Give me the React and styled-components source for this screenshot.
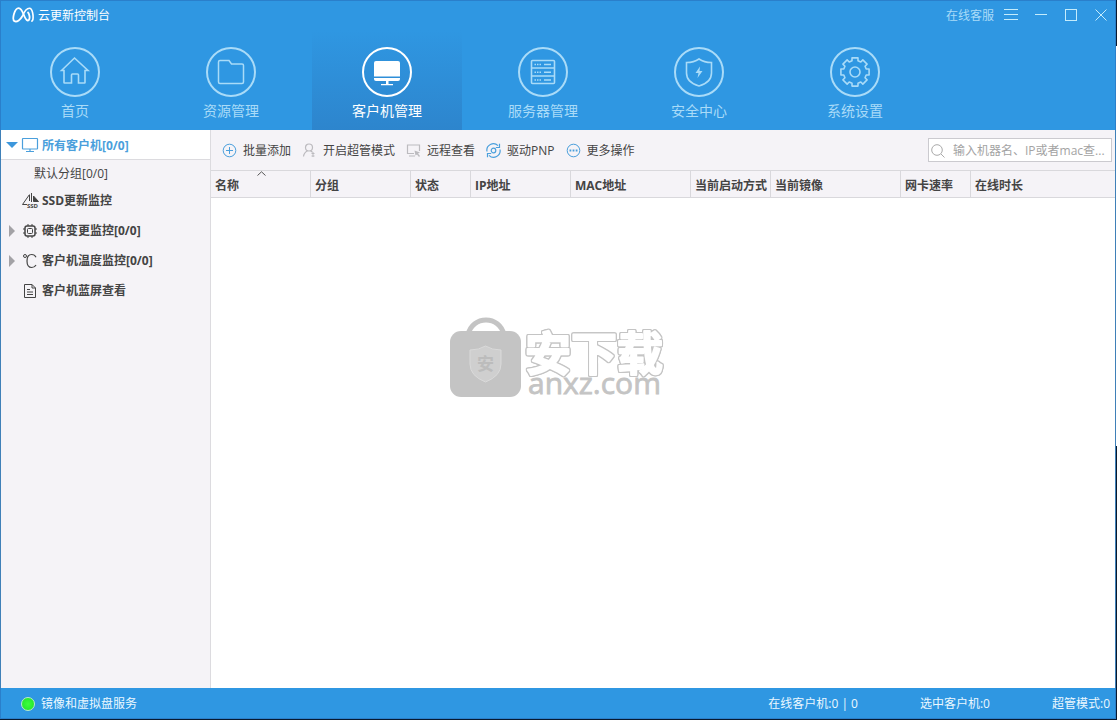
import { useState } from "react";
import styled, { createGlobalStyle, css } from "styled-components";

const GlobalStyle = createGlobalStyle`
  * {
    box-sizing: border-box;
  }

  body {
    margin: 0;
    font-family: "Open Sans", "Noto Sans CJK SC", sans-serif;
    font-size: 12px;
    line-height: 17px;
    color: #444;
  }

  button,
  input {
    margin: 0;
    padding: 0;
    border: none;
    background: none;
    font: inherit;
    color: inherit;
  }
`;

const Desktop = styled.div`
  height: 100vh;
  padding: 0 1px 1px 0;
  background: linear-gradient(#081a30 46px, #fff 46px, #fff 446px, #081a30 446px);
`;

const Window = styled.div`
  position: relative;
  display: flex;
  flex-direction: column;
  height: 100%;
  background: #fff;
`;

const Header = styled.header`
  background: #2f97e2;
  box-shadow: inset 1px 1px 0 #2a7fcb, inset -1px 0 0 #2a7fcb;
`;

const TitleBar = styled.div`
  display: flex;
  align-items: center;
  height: 30px;
  padding: 0 8px 0 12px;
  color: #fff;
`;

const Title = styled.h1`
  flex: 1;
  margin: 0 0 0 4px;
  font-size: 12px;
  font-weight: 400;
`;

const WindowControls = styled.div`
  display: flex;
  align-items: center;
  gap: 16px;
  color: #c4ecfc;
`;

const ServiceLink = styled.a`
  margin-right: -6px;
  color: #a9dbf8;
  text-decoration: none;
`;

const ControlButton = styled.button`
  display: flex;
  width: 14px;
  height: 14px;
`;

const Nav = styled.nav`
  display: flex;
  gap: 6px;
`;

const NavButton = styled.button`
  display: flex;
  flex-direction: column;
  align-items: center;
  gap: 4px;
  width: 150px;
  height: 100px;
  padding-top: 17px;
  font-size: 14px;
  line-height: 20px;
  color: #a9dbf8;

  ${(props) =>
    props.$active &&
    css`
      color: #fff;
      background: linear-gradient(#2f97e2, #2d85cd);
    `}
`;

const Body = styled.div`
  display: flex;
  flex: 1;
  min-height: 0;
  border-left: 1px solid #3f80b8;
  border-right: 1px solid #3f80b8;
`;

const Sidebar = styled.aside`
  flex: none;
  width: 210px;
  border-right: 1px solid #dcdbdf;
  background: #f5f3f7;
`;

const TreeList = styled.ul`
  margin: 0;
  padding: 0;
  list-style: none;
`;

const TreeItem = styled.button`
  display: flex;
  align-items: center;
  width: 100%;
  height: 30px;
  padding: 1px 0 0 5px;
  font-weight: 700;
  text-align: left;

  svg {
    margin-right: 4px;
    overflow: visible;
  }

  ${(props) =>
    props.$active &&
    css`
      border-bottom: 1px solid #dcdbdf;
      background: #fff;
      color: #4a9fdc;
    `}

  ${(props) =>
    props.$child &&
    css`
      height: 25px;
      padding: 2px 0 0 33px;
      font-weight: 400;
    `}
`;

const Arrow = styled.span`
  display: flex;
  justify-content: center;
  width: 12px;
  margin-right: 4px;

  &::before {
    content: "";
    border-style: solid;
    ${(props) =>
      props.$state === "open" &&
      css`
        border-width: 6px 6px 0;
        border-color: #3d97dc transparent transparent;
      `}
    ${(props) =>
      props.$state === "closed" &&
      css`
        border-width: 6px 0 6px 6px;
        border-color: transparent transparent transparent #a3a2a6;
      `}
    ${(props) =>
      !props.$state &&
      css`
        border-width: 0;
      `}
  }
`;

const Main = styled.main`
  flex: 1;
  min-width: 0;
`;

const Toolbar = styled.div`
  display: flex;
  align-items: center;
  gap: 11px;
  height: 40px;
  padding: 0 3px 0 11px;
  background: #f5f3f7;
`;

const ToolButton = styled.button`
  display: flex;
  align-items: center;
  gap: 6px;
  white-space: nowrap;

  svg {
    color: ${(props) => (props.$muted ? "#bcbbbf" : "#4a9fdc")};
  }
`;

const SearchBox = styled.label`
  display: flex;
  align-items: center;
  gap: 8px;
  width: 184px;
  height: 24px;
  margin-left: auto;
  padding: 1px 2px 0;
  border: 1px solid #cbcacf;
  background: #fff;
  color: #aaa;
`;

const SearchInput = styled.input`
  flex: 1;
  min-width: 0;
  outline: none;
  color: #444;

  &::placeholder {
    color: #a3a3a3;
    opacity: 1;
  }
`;

const Table = styled.table`
  width: 100%;
  table-layout: fixed;
  border-collapse: separate;
  border-spacing: 0;
`;

const HeadCell = styled.th`
  position: relative;
  width: ${(props) => (props.$width ? `${props.$width}px` : "auto")};
  height: 28px;
  padding: 2px 0 0 4px;
  border: solid #d9d8dc;
  border-width: 1px 1px 1px 0;
  background: #f5f3f7;
  font-weight: 700;
  text-align: left;
  white-space: nowrap;

  &:last-child {
    border-right: none;
  }
`;

const SortMark = styled.svg`
  position: absolute;
  top: 0;
  left: 50%;
  margin-left: -4px;
`;

const Watermark = styled.svg`
  position: absolute;
  top: 50%;
  left: 50%;
  transform: translate(-50%, -50%);
  pointer-events: none;
`;

const OutlinedName = styled.g`
  font-size: 46px;
  font-weight: 700;
  fill: #fff;
  stroke: #fff;
  stroke-width: 2px;
  stroke-linejoin: round;
  filter: drop-shadow(1px 0 0 #c4c4c4) drop-shadow(-1px 0 0 #c4c4c4)
    drop-shadow(0 1px 0 #c4c4c4) drop-shadow(0 -1px 0 #c4c4c4);
`;

const StatusBar = styled.footer`
  display: flex;
  align-items: center;
  gap: 62px;
  height: 31px;
  padding: 1px 6px 0 21px;
  border-bottom: 1px solid #2a7fcb;
  background: #2f97e2;
  box-shadow: inset 1px 0 0 #2a7fcb, inset -1px 0 0 #2a7fcb;
  color: #ebf8ff;
`;

const ServiceState = styled.div`
  display: flex;
  align-items: center;
  gap: 6px;
  margin-right: auto;
`;

const Lamp = styled.span`
  width: 14px;
  height: 14px;
  border: 1px solid #b9efc4;
  border-radius: 50%;
  background: radial-gradient(#3cff3c, #1fdf2b);
`;

const Icon = ({ size = 15, children }) => (
  <svg
    width={size}
    height={size}
    viewBox={`0 0 ${size} ${size}`}
    fill="none"
    stroke="currentColor"
    aria-hidden="true"
  >
    {children}
  </svg>
);

const Logo = () => (
  <svg width="22" height="16" viewBox="0 0 22 16" fill="none" stroke="#fff" aria-hidden="true">
    <path
      d="M10.500 9C8.500 12.500 5 15.500 2.500 14.200C-.3 12.500 2.500 1.200 6.700 1.200C9.600 1.200 11 6 12.500 9.500C14 13 15.500 14.200 16.800 13C18.300 11.500 17.500 6.500 15.500 5"
      strokeWidth="1.800"
    />
    <path
      d="M10.500 9C12.500 4 15 1.200 17.500 1.200C20.500 1.200 21.500 9 20.900 12.500C20.700 13.700 20 14.300 19.200 14.300"
      strokeWidth="1.600"
    />
  </svg>
);

// cog outline with eight flat teeth
const teeth = Array.from({ length: 8 }, (_, i) => {
  const point = (deg, r) => {
    const a = ((i * 45 + deg - 90) * Math.PI) / 180;
    return `${(25 + r * Math.cos(a)).toFixed(2)} ${(25 + r * Math.sin(a)).toFixed(2)}`;
  };
  return [point(-15, 11.6), point(-12, 14.4), point(12, 14.4), point(15, 11.6)].join(" L");
}).join(" L");

const navIcons = {
  home: (
    <path
      d="M11.500 23.500L24.500 11L38 23.500H35V35.500Q35 36 34.500 36H28.500V28Q28.500 27 27.500 27H22.500Q21.500 27 21.500 28V36H14.500Q14 36 14 35.500V23.500Z"
      strokeWidth="1.600"
    />
  ),
  folder: (
    <path
      d="M12.500 15Q12.500 13.500 14 13.500H23L25.500 17H36Q37.500 17 37.500 18.500V35Q37.500 36.500 36 36.500H14Q12.500 36.500 12.500 35Z"
      strokeWidth="1.500"
    />
  ),
  client: (
    <g fill="currentColor" stroke="none">
      <path d="M12 16Q12 14 14 14H36Q38 14 38 16V29.500H12Z" />
      <path d="M12 31H38V32Q38 34 36 34H14Q12 34 12 32Z" />
      <path d="M24 34H26.500V37H31V38.200H19V37H24Z" />
    </g>
  ),
  server: (
    <>
      <rect x="13.500" y="13.500" width="23" height="23" rx="1" strokeWidth="1.600" />
      <path d="M13.500 21H36.500M13.500 29H36.500" strokeWidth="1.600" />
      <path d="M16.500 17.500H23M16.500 25.200H23M16.500 33H23" strokeDasharray="1.500 1" strokeWidth="1.400" />
      <path d="M26 17.500H33M26 25.200H33M26 33H33" strokeWidth="1.400" />
    </>
  ),
  shield: (
    <>
      <path
        d="M25 12Q30 15.500 37.500 15.500V26C37.500 33 32 37 25 39C18 37 12.500 33 12.500 26V15.500Q20 15.500 25 12Z"
        strokeWidth="1.600"
      />
      <path d="M26 19.500L21.500 26H24.500L23.500 31L28.500 24H25.500Z" fill="currentColor" stroke="none" />
    </>
  ),
  cog: (
    <>
      <path d={`M${teeth}Z`} strokeWidth="1.600" strokeLinejoin="round" />
      <circle cx="25" cy="25" r="5" strokeWidth="1.600" />
    </>
  ),
};

const treeIcons = {
  monitor: (
    <Icon size={16}>
      <rect x="0.500" y="1.500" width="15" height="10.500" rx="0.500" strokeWidth="1.200" />
      <path d="M8 12V14.500M4 14.500H12" strokeWidth="1.200" />
    </Icon>
  ),
  ssd: (
    <Icon size={16}>
      <path d="M7.500 1.500L.5 11.500H5M9.500 0V9M7.500 2V8" />
      <path d="M11.500 3L16.500 8.500H11.500Z" fill="currentColor" />
      <text x="5" y="15" fontSize="6" fontWeight="700" fill="currentColor" stroke="none">
        SSD
      </text>
    </Icon>
  ),
  chip: (
    <Icon size={16}>
      <rect x="3" y="3" width="10" height="10" rx="2" strokeWidth="1.500" />
      <rect x="5.500" y="5.500" width="5" height="5" rx="1" />
      <path d="M6 1V3M10 1V3M6 13V15M10 13V15M1 6H3M1 10H3M13 6H15M13 10H15" />
    </Icon>
  ),
  celsius: (
    <Icon size={16}>
      <circle cx="3" cy="3" r="1.500" />
      <path
        d="M14 4.200C13 2.200 11.500 1.500 9.800 1.500C6.800 1.500 5 4 5 8C5 12 6.800 14.500 9.800 14.500C11.500 14.500 13 13.800 14 12"
        strokeWidth="1.200"
      />
    </Icon>
  ),
  file: (
    <Icon size={16}>
      <path d="M2.500 1.500H10L13.500 5V14.500H2.500ZM10 1.500V5H13.500" />
      <path d="M5 6.500H8M5 9H11M5 11.500H11" />
    </Icon>
  ),
};

const toolIcons = {
  add: (
    <Icon>
      <circle cx="7.500" cy="7.500" r="6.300" />
      <path d="M7.500 4V11M4 7.500H11" />
    </Icon>
  ),
  admin: (
    <Icon>
      <circle cx="7" cy="4.500" r="3.500" strokeWidth="1.200" />
      <path d="M1.500 13.500C1.800 10.500 3.500 8.800 5.500 7.700M8.500 7.700L10.500 9.300" strokeWidth="1.200" />
      <path d="M11 9V14M9.500 10.500H12.500M9.500 13H12.500" />
    </Icon>
  ),
  remote: (
    <Icon>
      <path d="M8 10.500H1.500V2H13.500V8M3 13H9" strokeWidth="1.200" />
      <path d="M8.500 7.500L14 9.500L12 10.500L14 13L13 14L11 11.500L9.500 12.500Z" fill="currentColor" stroke="none" />
    </Icon>
  ),
  driver: (
    <Icon>
      <circle cx="7.500" cy="7.500" r="2.300" strokeWidth="1.200" />
      <path d="M1 8.500A6.500 6.500 0 0 1 12 2.700M14 6.500A6.500 6.500 0 0 1 3 12.300" strokeWidth="1.200" />
      <path d="M13.500 .8V4.500H9.800M1.500 14.200V10.500H5.200" strokeWidth="1.200" />
    </Icon>
  ),
  more: (
    <Icon>
      <circle cx="7.500" cy="7.500" r="6.300" />
      <path d="M3.500 7.500H11.500" strokeWidth="1.800" strokeDasharray="1.800 1.300" />
    </Icon>
  ),
};

const navItems = [
  { key: "home", label: "首页" },
  { key: "folder", label: "资源管理" },
  { key: "client", label: "客户机管理" },
  { key: "server", label: "服务器管理" },
  { key: "shield", label: "安全中心" },
  { key: "cog", label: "系统设置" },
];

const treeItems = [
  { label: "所有客户机[0/0]", icon: "monitor", arrow: "open" },
  { label: "默认分组[0/0]", child: true },
  { label: "SSD更新监控", icon: "ssd" },
  { label: "硬件变更监控[0/0]", icon: "chip", arrow: "closed" },
  { label: "客户机温度监控[0/0]", icon: "celsius", arrow: "closed" },
  { label: "客户机蓝屏查看", icon: "file" },
];

const tools = [
  { key: "add", label: "批量添加" },
  { key: "admin", label: "开启超管模式", muted: true },
  { key: "remote", label: "远程查看", muted: true },
  { key: "driver", label: "驱动PNP" },
  { key: "more", label: "更多操作" },
];

const columns = [
  { label: "名称", width: 100, sorted: true },
  { label: "分组", width: 100 },
  { label: "状态", width: 60 },
  { label: "IP地址", width: 100 },
  { label: "MAC地址", width: 120 },
  { label: "当前启动方式", width: 80 },
  { label: "当前镜像", width: 130 },
  { label: "网卡速率", width: 70 },
  { label: "在线时长" },
];

function TopHeader({ page, onChange }) {
  return (
    <Header>
      <TitleBar>
        <Logo />
        <Title>云更新控制台</Title>
        <WindowControls>
          <ServiceLink href="#service">在线客服</ServiceLink>
          <ControlButton aria-label="菜单">
            <Icon size={14}>
              <path d="M0 1.500H14M0 6.500H14M0 11.500H14" />
            </Icon>
          </ControlButton>
          <ControlButton aria-label="最小化">
            <Icon size={14}>
              <path d="M1 6.500H13" />
            </Icon>
          </ControlButton>
          <ControlButton aria-label="最大化">
            <Icon size={14}>
              <rect x="1.500" y="1.500" width="11" height="11" />
            </Icon>
          </ControlButton>
          <ControlButton aria-label="关闭">
            <Icon size={14}>
              <path d="M1.500 1.500L12.500 12.500M12.500 1.500L1.500 12.500" />
            </Icon>
          </ControlButton>
        </WindowControls>
      </TitleBar>
      <Nav>
        {navItems.map(({ key, label }) => (
          <NavButton
            key={key}
            $active={page === key}
            aria-current={page === key ? "page" : undefined}
            onClick={() => onChange(key)}
          >
            <Icon size={50}>
              <circle cx="25" cy="25" r="24" strokeWidth="2" />
              {navIcons[key]}
            </Icon>
            {label}
          </NavButton>
        ))}
      </Nav>
    </Header>
  );
}

function ClientTree() {
  const [selected, setSelected] = useState(treeItems[0].label);

  return (
    <Sidebar>
      <TreeList>
        {treeItems.map(({ label, icon, arrow, child }) => (
          <li key={label}>
            <TreeItem
              $active={selected === label}
              $child={child}
              onClick={() => setSelected(label)}
            >
              {!child && <Arrow $state={arrow} />}
              {treeIcons[icon]}
              {label}
            </TreeItem>
          </li>
        ))}
      </TreeList>
    </Sidebar>
  );
}

function ClientTable() {
  return (
    <Table>
      <thead>
        <tr>
          {columns.map(({ label, width, sorted }) => (
            <HeadCell
              key={label}
              $width={width}
              scope="col"
              aria-sort={sorted ? "ascending" : undefined}
            >
              {label}
              {sorted && (
                <SortMark width="9" height="5" viewBox="0 0 9 5" fill="none" stroke="#555">
                  <path d="M.5 4.500L4.500 .8L8.500 4.500" />
                </SortMark>
              )}
            </HeadCell>
          ))}
        </tr>
      </thead>
      <tbody />
    </Table>
  );
}

function Brand() {
  return (
    <Watermark width="216" height="96" viewBox="0 -5 216 96">
      <path d="M18 18C22 -2 50 -2 54 18" fill="none" stroke="#c4c4c4" strokeWidth="5" />
      <rect x="0" y="14" width="71" height="66" rx="11" fill="#c4c4c4" />
      <path
        d="M35.500 29Q42 33 51 33V47Q51 59 35.500 65Q20 59 20 47V33Q29 33 35.500 29Z"
        fill="#cfcfcf"
        stroke="#dadada"
      />
      <text x="35.500" y="53" fontSize="17" fontWeight="700" textAnchor="middle" fill="#bcbcbc">
        安
      </text>
      <OutlinedName>
        <text x="75" y="53">
          安下载
        </text>
      </OutlinedName>
      <text x="78" y="77" fontSize="30" fill="#c4c4c4" stroke="#c4c4c4" strokeWidth="0.800">
        anxz.com
      </text>
    </Watermark>
  );
}

function App() {
  const [page, setPage] = useState("client");

  return (
    <>
      <GlobalStyle />
      <Desktop>
        <Window>
          <TopHeader page={page} onChange={setPage} />
          <Body>
            <ClientTree />
            <Main>
              <Toolbar>
                {tools.map(({ key, label, muted }) => (
                  <ToolButton key={key} $muted={muted}>
                    {toolIcons[key]}
                    {label}
                  </ToolButton>
                ))}
                <SearchBox>
                  <Icon size={14}>
                    <circle cx="6" cy="6" r="5.300" />
                    <path d="M10 10L13.500 13.500" />
                  </Icon>
                  <SearchInput
                    type="text"
                    aria-label="搜索"
                    placeholder="输入机器名、IP或者mac查..."
                  />
                </SearchBox>
              </Toolbar>
              <ClientTable />
            </Main>
          </Body>
          <StatusBar>
            <ServiceState>
              <Lamp />
              镜像和虚拟盘服务
            </ServiceState>
            <span>在线客户机:0 | 0</span>
            <span>选中客户机:0</span>
            <span>超管模式:0</span>
          </StatusBar>
          <Brand />
        </Window>
      </Desktop>
    </>
  );
}

export default App;
